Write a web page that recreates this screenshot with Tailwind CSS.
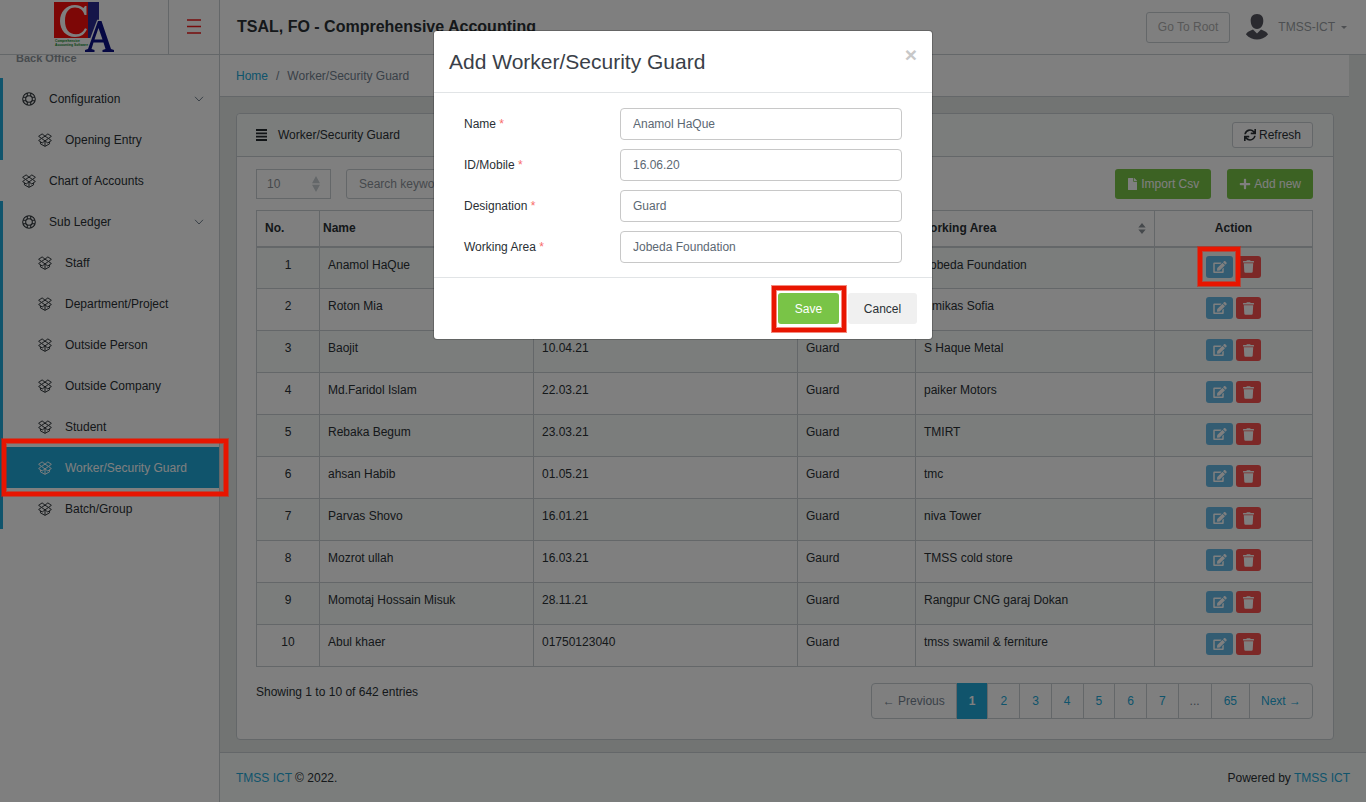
<!DOCTYPE html>
<html lang="en">
<head>
<meta charset="utf-8">
<title>TSAL, FO - Comprehensive Accounting</title>
<script src="https://cdn.jsdelivr.net/npm/@tailwindcss/browser@4"></script>
</head>
<body class="bg-white font-['Liberation_Sans',Arial,sans-serif] text-[12px] leading-[18px] text-[#2a3035]">

<svg class="hidden" aria-hidden="true">
  <symbol id="ring" viewBox="0 0 16 16"><g fill="none" stroke="currentColor" stroke-width="1.200"><circle cx="8" cy="8" r="7.200"/><circle cx="8" cy="8" r="3.800"/><path d="M6 1.200v3.500M10 1.200v3.500M6 11.300v3.500M10 11.300v3.500M1.200 6h3.500M1.200 10h3.500M11.300 6h3.500M11.300 10h3.500"/></g></symbol>
  <symbol id="box" viewBox="0 0 16 16"><g fill="none" stroke="currentColor" stroke-width="1.100" stroke-linejoin="round"><path d="M4.700 1 8 3.600 4 6.200.7 3.800zM11.300 1 8 3.600 12 6.200l3.300-2.400zM4 6.200 8 9l-3.200 2.400L.7 8.600zM12 6.200 8 9l3.200 2.400 4.100-2.800zM2.800 10.200v2.200L8 15.300l5.200-2.900v-2.200M8 9v6"/></g></symbol>
  <symbol id="edit" viewBox="0 0 576 512"><path fill="currentColor" d="M402.600 83.200l90.200 90.200c3.800 3.800 3.800 10 0 13.800L274.400 405.600l-92.800 10.300c-12.400 1.400-22.900-9.100-21.500-21.500l10.300-92.800L388.800 83.200c3.800-3.800 10-3.800 13.800 0zm162-22.900l-48.800-48.800c-15.200-15.200-39.900-15.200-55.200 0l-35.400 35.400c-3.800 3.800-3.800 10 0 13.800l90.200 90.200c3.800 3.800 10 3.800 13.800 0l35.400-35.400c15.200-15.300 15.200-40 0-55.200zM384 346.200V448H64V128h229.800c3.200 0 6.200-1.300 8.500-3.500l40-40c7.600-7.600 2.200-20.500-8.500-20.500H48C21.500 64 0 85.500 0 112v352c0 26.500 21.500 48 48 48h352c26.500 0 48-21.500 48-48V306.200c0-10.700-12.900-16-20.500-8.500l-40 40c-2.200 2.300-3.500 5.300-3.500 8.500z"/></symbol>
  <symbol id="trash" viewBox="0 0 448 512"><path fill="currentColor" d="M432 32H312l-9.400-18.700A24 24 0 0 0 281.100 0H166.800a23.720 23.720 0 0 0-21.400 13.300L136 32H16A16 16 0 0 0 0 48v32a16 16 0 0 0 16 16h416a16 16 0 0 0 16-16V48a16 16 0 0 0-16-16zM53.200 467a48 48 0 0 0 47.900 45h245.800a48 48 0 0 0 47.900-45L416 128H32z"/></symbol>
  <symbol id="chev" viewBox="0 0 10 6"><path d="M1 .8 5 5 9 .8" fill="none" stroke="currentColor"/></symbol>
  <symbol id="sort" viewBox="0 0 8 12"><path fill="currentColor" d="M4 0 8 5H0zM4 12 0 7h8z"/></symbol>
</svg>

<div class="relative">
  <header class="flex h-[55px] items-stretch border-b border-[#c8ced3] bg-white">
    <a href="#" class="flex w-[169px] justify-center border-r border-[#c8ced3]" aria-label="CIA Comprehensive Accounting Software">
      <svg class="mt-px h-[53px] w-[62px]" viewBox="0 0 62 53">
        <rect x="1" y="1" width="34" height="36" fill="#fb0f0c"/>
        <rect x="35" y="1" width="11" height="36" fill="#2a2a92"/>
        <path d="M33.500 14V5l-1.500 0-1.500 2C28 5 25.500 4 22 4 13 4 7 11 7 20s6 16 15 16c6 0 10-3 12-8l-2-.8c-2 4-5 6-9 6-7 0-11-5-11-13.500S16 6.500 22 6.500c5 0 8.500 3 9.500 7.500z" fill="#fff"/>
        <path d="M32 50v-2l3-1 10-27h3l10 27 3 1v2z" fill="#fff" stroke="#fff" stroke-width="2.500"/>
        <path d="M32 51v-2l3-1 10-28h3.500l9.500 28 3 1v2H49.500v-2l3-1-2-6.500H40.500L38.500 48l3 1v2zM41.500 38.500h8L45.500 27z" fill="#0d1187"/>
        <text x="2" y="41" font-size="3.300" font-weight="700" fill="#0a8a2a">Comprehensive</text>
        <text x="2" y="45" font-size="3.300" font-weight="700" fill="#0a8a2a">Accounting Software</text>
      </svg>
    </a>
    <button class="flex w-[51px] items-center justify-center border-r border-[#c8ced3] text-[#f01818]" aria-label="Toggle sidebar">
      <svg class="h-4 w-4" viewBox="0 0 16 16"><path d="M1 1h14M1 7.500h14M1 14h14" stroke="currentColor" stroke-width="1.600"/></svg>
    </button>
    <h1 class="ml-[17px] self-center text-[16px] font-bold leading-6">TSAL, FO - Comprehensive Accounting</h1>
    <div class="ml-auto flex items-center pr-[19px]">
      <button class="h-[31px] rounded-[3px] border border-[#c8ced3] px-[11px] text-[#b0b0b0]">Go To Root</button>
      <svg class="ml-4 h-[26px] w-[22px]" viewBox="0 0 22 26"><path fill="#54555f" d="M11 0c4.500 0 6.500 3 6.300 7-.2 4-2 8-6.300 8S4.900 11 4.700 7C4.500 3 6.500 0 11 0zM0 20.500C1 17.500 4 17 7 15.500l4 4 4-4c3 1.500 6 2 7 5-3 3.500-7 5-11 5s-8-1.500-11-5z"/></svg>
      <a href="#" class="ml-[10px] flex items-center gap-[6px] text-[#9a9fa4]">TMSS-ICT <span class="border-x-[3px] border-t-[3px] border-x-transparent border-t-[#9a9fa4]"></span></a>
    </div>
  </header>

  <div class="flex">
    <nav class="w-[220px] shrink-0 overflow-hidden border-r border-[#c8ced3] bg-white" aria-label="Sidebar">
      <p class="-mt-[6px] mb-[11px] pl-4 text-[11px] font-bold text-[#8f979d]">Back Office</p>
      <div id="menu"></div>
    </nav>

    <div class="flex min-w-0 grow flex-col bg-[#e4e9e7]">
      <ol class="mr-[17px] flex h-[42px] items-center border-b border-[#c8ced3] bg-white px-4">
        <li><a href="#" class="text-[#20a8d8]">Home</a></li>
        <li class="px-2 text-[#73818f]">/</li>
        <li class="text-[#73818f]">Worker/Security Guard</li>
      </ol>

      <main class="ml-4 mr-8 mt-4 rounded-[4px] border border-[#c8ced3] bg-white">
        <div class="flex h-[43px] items-center rounded-t-[4px] border-b border-[#c8ced3] bg-[#f6faf8] pl-[19px] pr-5">
          <svg class="h-3 w-[11px]" viewBox="0 0 11 12"><path d="M0 1h11M0 4.300h11M0 7.600h11M0 11h11" stroke="#23282c" stroke-width="1.800"/></svg>
          <h2 class="ml-[11px]">Worker/Security Guard</h2>
          <button class="ml-auto flex h-[26px] items-center gap-[3px] rounded-[3px] border border-[#c8ced3] bg-white px-[11px]">
            <svg class="h-3 w-3" viewBox="0 0 512 512"><path fill="currentColor" d="M440.650 12.570l4 82.770A247.160 247.160 0 0 0 255.830 8C134.730 8 33.910 94.920 12.290 209.820A12 12 0 0 0 24.090 224h49.050a12 12 0 0 0 11.670-9.260 175.910 175.910 0 0 1 317-56.940l-101.460-4.860a12 12 0 0 0-12.570 12v47.410a12 12 0 0 0 12 12H500a12 12 0 0 0 12-12V12a12 12 0 0 0-12-12h-47.370a12 12 0 0 0-11.980 12.570zM255.830 432a175.610 175.610 0 0 1-146-77.800l101.800 4.870a12 12 0 0 0 12.570-12v-47.400a12 12 0 0 0-12-12H12a12 12 0 0 0-12 12V500a12 12 0 0 0 12 12h47.350a12 12 0 0 0 12-12.600l-4.150-82.570A247.170 247.170 0 0 0 255.830 504c121.110 0 221.930-86.920 243.550-201.820a12 12 0 0 0-11.800-14.180h-49.050a12 12 0 0 0-11.670 9.260A175.860 175.860 0 0 1 255.830 432z"/></svg>
            Refresh
          </button>
        </div>

        <div class="pb-5 pl-[19px] pr-5 pt-3">
          <div class="flex items-center">
            <div class="relative text-[#8b9299]">
              <select class="h-[30px] w-[75px] appearance-none border border-[#c8ced3] bg-white px-[10px]" aria-label="Entries per page"><option>10</option></select>
              <svg class="pointer-events-none absolute right-[11px] top-[7px] h-4 w-2 text-[#c8ced3]" viewBox="0 0 8 12" preserveAspectRatio="none"><path fill="currentColor" d="M4 0 8 5.500H0zM4 12 0 6.500h8z"/></svg>
            </div>
            <input type="search" class="ml-[15px] h-[30px] w-[200px] rounded-[3px] border border-[#c8ced3] bg-white px-3 placeholder:text-[#8b9299]" placeholder="Search keyword" aria-label="Search keyword">
            <button class="ml-auto flex h-[30px] items-center gap-[3px] rounded-[3px] bg-[#79c447] px-3 text-white">
              <svg class="h-3 w-[11px]" viewBox="0 0 384 512"><path fill="currentColor" d="M224 136V0H24C10.700 0 0 10.700 0 24v464c0 13.300 10.700 24 24 24h336c13.300 0 24-10.700 24-24V160H248c-13.200 0-24-10.800-24-24zm160-14.100v6.100H256V0h6.100c6.400 0 12.500 2.500 17 7l97.900 98c4.500 4.500 7 10.600 7 16.900z"/></svg>Import Csv</button>
            <button class="ml-4 flex h-[30px] items-center gap-[3px] rounded-[3px] bg-[#79c447] px-3 text-white">
              <svg class="h-3 w-3" viewBox="0 0 448 512"><path fill="currentColor" d="M416 208H272V64c0-17.670-14.330-32-32-32h-32c-17.670 0-32 14.330-32 32v144H32c-17.670 0-32 14.330-32 32v32c0 17.670 14.330 32 32 32h144v144c0 17.670 14.330 32 32 32h32c17.670 0 32-14.330 32-32V304h144c17.670 0 32-14.330 32-32v-32c0-17.670-14.330-32-32-32z"/></svg>Add new</button>
          </div>

          <table class="mt-[11px] w-full table-fixed border-collapse text-left">
            <colgroup><col class="w-[63px]"><col class="w-[214px]"><col class="w-[264px]"><col class="w-[118px]"><col class="w-[239px]"><col class="w-[158px]"></colgroup>
            <thead>
              <tr class="h-9 border-b-2 border-[#c8ced3]">
                <th class="border-x border-t border-[#c8ced3] px-2">No.</th>
                <th class="border-x border-t border-[#c8ced3] px-[3px]">Name</th>
                <th class="border-x border-t border-[#c8ced3] px-[3px]">ID/Mobile</th>
                <th class="border-x border-t border-[#c8ced3] px-[3px]">Designation</th>
                <th class="border-x border-t border-[#c8ced3] pl-[3px] pr-2"><span class="flex items-center justify-between">Working Area<svg class="h-[11px] w-2 text-[#8b9299]"><use href="#sort"/></svg></span></th>
                <th class="border-x border-t border-[#c8ced3] px-2 text-center">Action</th>
              </tr>
            </thead>
            <tbody id="rows"></tbody>
          </table>

          <div class="mt-4 flex items-start justify-between">
            <p>Showing 1 to 10 of 642 entries</p>
            <ul class="flex h-9 divide-x divide-[#c8ced3] rounded-[4px] border border-[#c8ced3] text-[#20a8d8]">
              <li class="flex"><a href="#" class="flex items-center px-[11px] text-[#73818f]">← Previous</a></li>
              <li class="-my-px flex"><a href="#" class="flex items-center bg-[#20a8d8] px-3 font-bold text-white" aria-current="page">1</a></li>
              <li class="flex"><a href="#" class="flex items-center px-3">2</a></li>
              <li class="flex"><a href="#" class="flex items-center px-3">3</a></li>
              <li class="flex"><a href="#" class="flex items-center px-3">4</a></li>
              <li class="flex"><a href="#" class="flex items-center px-3">5</a></li>
              <li class="flex"><a href="#" class="flex items-center px-3">6</a></li>
              <li class="flex"><a href="#" class="flex items-center px-3">7</a></li>
              <li class="flex"><a href="#" class="flex items-center px-[11px] text-[#73818f]">...</a></li>
              <li class="flex"><a href="#" class="flex items-center px-3">65</a></li>
              <li class="flex"><a href="#" class="flex items-center px-[11px]">Next →</a></li>
            </ul>
          </div>
        </div>
      </main>

      <footer class="mt-3 flex h-[50px] items-center justify-between border-t border-[#c8ced3] bg-[#f6faf8] px-4">
        <span><a href="#" class="text-[#20a8d8]">TMSS ICT</a> © 2022.</span>
        <span>Powered by <a href="#" class="text-[#20a8d8]">TMSS ICT</a></span>
      </footer>
    </div>
  </div>

  <div class="absolute inset-0 bg-black/50"></div>

  <div class="absolute inset-x-0 top-[30px] mx-auto w-[500px] rounded-[4px] border border-black/20 bg-white bg-clip-padding" role="dialog" aria-modal="true" aria-labelledby="dlg-title">
    <div class="flex h-[62px] items-start justify-between border-b border-[#e1e4e6] px-[15px] pt-4">
      <h2 id="dlg-title" class="text-[21px] leading-[30px] text-[#3a3f48]">Add Worker/Security Guard</h2>
      <button class="-mt-[2px] text-[21px] font-bold leading-5 text-[#c8c8c8]" aria-label="Close">×</button>
    </div>
    <form>
      <div class="grid grid-cols-[156px_1fr] items-center gap-y-[9px] px-[30px] pb-[14px] pt-[15px]">
        <label for="f-name">Name <span class="text-[#f86c6b]">*</span></label>
        <input id="f-name" class="h-8 w-full rounded-[4px] border border-[#c8c8c8] px-3 text-[#5c6873]" value="Anamol HaQue">
        <label for="f-id">ID/Mobile <span class="text-[#f86c6b]">*</span></label>
        <input id="f-id" class="h-8 w-full rounded-[4px] border border-[#c8c8c8] px-3 text-[#5c6873]" value="16.06.20">
        <label for="f-des">Designation <span class="text-[#f86c6b]">*</span></label>
        <input id="f-des" class="h-8 w-full rounded-[4px] border border-[#c8c8c8] px-3 text-[#5c6873]" value="Guard">
        <label for="f-area">Working Area <span class="text-[#f86c6b]">*</span></label>
        <input id="f-area" class="h-8 w-full rounded-[4px] border border-[#c8c8c8] px-3 text-[#5c6873]" value="Jobeda Foundation">
      </div>
      <div class="flex justify-end gap-[9px] border-t border-[#e1e4e6] p-[15px]">
        <button type="button" class="h-[31px] w-[61px] rounded-[3px] bg-[#79c447] text-white">Save</button>
        <button type="button" class="h-[31px] w-[69px] rounded-[3px] bg-[#f0f0f0]">Cancel</button>
      </div>
    </form>
  </div>

  <!-- tutorial highlight frames -->
  <div class="pointer-events-none absolute left-[2px] top-[439px] h-[57px] w-[226px] border-4 border-[#e81500] shadow-[0_0_0_1px_#e8150080,inset_0_0_0_1px_#e8150080]"></div>
  <div class="pointer-events-none absolute right-[126px] top-[247px] h-[39px] w-[42px] border-4 border-[#e81500] shadow-[0_0_0_1px_#e8150080,inset_0_0_0_1px_#e8150080]"></div>
  <div class="pointer-events-none absolute inset-x-0 top-[286px] mx-auto w-[500px]">
    <div class="ml-auto mr-[87px] h-[46px] w-[74px] border-4 border-[#e81500] shadow-[0_0_0_1px_#e8150080,inset_0_0_0_1px_#e8150080]"></div>
  </div>
</div>

<script>
const item = (name, icon, cls, extra = '') =>
  `<a href="#" class="flex h-[41px] items-center ${cls}"><svg class="h-[14px] w-[14px]"><use href="#${icon}"/></svg><span class="ml-[13px]">${name}</span>${extra}</a>`;
const chev = '<svg class="ml-auto mr-[15px] h-[6px] w-[10px] text-[#73818f]"><use href="#chev"/></svg>';
const sub = n => item(n, 'box', n === 'Worker/Security Guard' ? '-ml-[3px] bg-[#20a8d8] pl-[38px] text-white' : 'pl-[35px]');
document.getElementById('menu').innerHTML =
  `<div class="border-l-[3px] border-[#20a8d8]">${item('Configuration', 'ring', 'pl-[19px]', chev)}${sub('Opening Entry')}</div>` +
  item('Chart of Accounts', 'box', 'pl-[22px]') +
  `<div class="border-l-[3px] border-[#20a8d8]">${item('Sub Ledger', 'ring', 'pl-[19px]', chev)}${
    ['Staff', 'Department/Project', 'Outside Person', 'Outside Company', 'Student', 'Worker/Security Guard', 'Batch/Group'].map(sub).join('')}</div>`;

const data = [
  ['Anamol HaQue', '16.06.20', 'Guard', 'Jobeda Foundation'],
  ['Roton Mia', '12.05.21', 'Guard', 'Amikas Sofia'],
  ['Baojit', '10.04.21', 'Guard', 'S Haque Metal'],
  ['Md.Faridol Islam', '22.03.21', 'Guard', 'paiker Motors'],
  ['Rebaka Begum', '23.03.21', 'Guard', 'TMIRT'],
  ['ahsan Habib', '01.05.21', 'Guard', 'tmc'],
  ['Parvas Shovo', '16.01.21', 'Guard', 'niva Tower'],
  ['Mozrot ullah', '16.03.21', 'Gaurd', 'TMSS cold store'],
  ['Momotaj Hossain Misuk', '28.11.21', 'Guard', 'Rangpur CNG garaj Dokan'],
  ['Abul khaer', '01750123040', 'Guard', 'tmss swamil &amp; ferniture'],
];
document.getElementById('rows').innerHTML = data.map((r, i) =>
  `<tr class="h-[42px] align-top odd:bg-[#f6faf8]">
    <td class="border border-[#c8ced3] px-2 pt-2 text-center">${i + 1}</td>
    ${r.map(c => `<td class="border border-[#c8ced3] px-2 pt-2">${c}</td>`).join('')}
    <td class="border border-[#c8ced3] px-2 pt-2"><div class="flex justify-center gap-[3px] text-white">
      <button class="flex h-[22px] w-[27px] items-center justify-center rounded-[3px] bg-[#67b8e4]" aria-label="Edit"><svg class="h-3 w-[14px]"><use href="#edit"/></svg></button>
      <button class="flex h-[22px] w-[25px] items-center justify-center rounded-[3px] bg-[#f8504f]" aria-label="Delete"><svg class="h-[13px] w-[11px]"><use href="#trash"/></svg></button>
    </div></td>
  </tr>`).join('');
</script>
</body>
</html>
